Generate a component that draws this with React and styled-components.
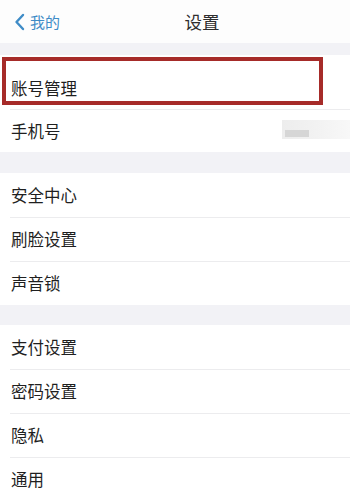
import React from 'react';
import styled, { createGlobalStyle } from 'styled-components';

const Global = createGlobalStyle`
  body {
    margin: 0;
    background: #ffffff;
    font-family: "Noto Sans CJK SC", "Noto Sans", sans-serif;
  }
`;

const Screen = styled.div`
  width: 350px;
  height: 500px;
  overflow: hidden;
  background: #f3f3f7;
  display: flex;
  flex-direction: column;
`;

const Header = styled.div`
  height: 43px;
  flex-shrink: 0;
  background: #fdfdfd;
  display: grid;
  grid-template-columns: 1fr auto 1fr;
  align-items: center;
`;

const Back = styled.div`
  display: flex;
  align-items: center;
  gap: 5px;
  padding-left: 14px;
  color: #3f8cc7;
  font-size: 15px;
`;

const Title = styled.div`
  font-size: 17.5px;
  color: #2e2e2e;
  margin-left: 54px;
`;

const Gap = styled.div`
  height: ${p => p.h}px;
  flex-shrink: 0;
  background: #f2f2f6;
`;

const Group = styled.div`
  background: #ffffff;
  flex-shrink: 0;
`;

const Row = styled.div`
  position: relative;
  height: ${p => p.h || 44}px;
  padding-top: ${p => p.pt || 0}px;
  box-sizing: border-box;
  display: flex;
  align-items: center;
  justify-content: space-between;
  padding-left: 11px;
  font-size: 16.5px;
  color: #1f1f1f;
  &::before {
    content: '';
    display: ${p => (p.first ? 'none' : 'block')};
    position: absolute;
    top: 0;
    left: 10px;
    right: 0;
    height: 1px;
    background: #ececee;
  }
`;

const Highlight = styled.div`
  position: absolute;
  left: 2px;
  top: 2px;
  width: 321px;
  height: 48px;
  box-sizing: border-box;
  border: 4px solid #a62b29;
`;

const Blur = styled.div`
  width: 68px;
  height: 19px;
  margin-top: -2px;
  background: linear-gradient(90deg, #ededed 0%, #f3f3f3 60%, #f8f8f8 100%);
  position: relative;
  filter: blur(0.6px);
  &::after {
    content: '';
    position: absolute;
    left: 3px;
    top: 10px;
    width: 24px;
    height: 7px;
    background: #d6d6d6;
  }
`;

const Chevron = () => (
  <svg width="11" height="18" viewBox="0 0 11 18">
    <path d="M9 2 L2.5 9 L9 16" fill="none" stroke="#3f8cc7" strokeWidth="2.4" strokeLinecap="round" strokeLinejoin="round" />
  </svg>
);

export default function App() {
  return (
    <>
      <Global />
      <Screen>
        <Header>
          <Back><Chevron />我的</Back>
          <Title>设置</Title>
          <div />
        </Header>
        <Gap h={12} />
        <Group>
          <Row first h={54} pt={11}>
            账号管理
            <Highlight />
          </Row>
          <Row h={43}>
            手机号
            <Blur />
          </Row>
        </Group>
        <Gap h={21} />
        <Group>
          <Row first>安全中心</Row>
          <Row>刷脸设置</Row>
          <Row>声音锁</Row>
        </Group>
        <Gap h={20} />
        <Group>
          <Row first>支付设置</Row>
          <Row>密码设置</Row>
          <Row>隐私</Row>
          <Row>通用</Row>
        </Group>
      </Screen>
    </>
  );
}
